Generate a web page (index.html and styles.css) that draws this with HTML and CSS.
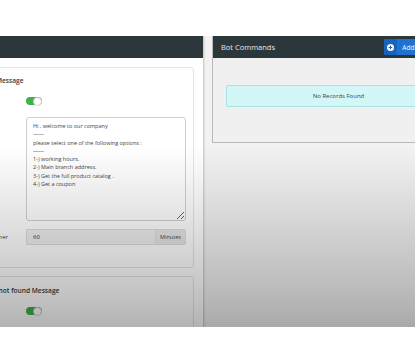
FILE: index.html
```html
<!DOCTYPE html>
<html lang="en">
<head>
    <meta charset="UTF-8">
    <meta name="viewport" content="width=device-width, initial-scale=1.0">
    <title>Bot Settings</title>
    <link rel="stylesheet" href="styles.css">
</head>
<body>
    <div class="topbar"></div>

    <div class="main">
        <section class="panel panel-left">
            <div class="panel-head"></div>
            <div class="panel-body">
                <div class="card card-welcome">
                    <h3>Welcome Message</h3>
                    <div class="row row-switch">
                        <label></label>
                        <span class="switch"></span>
                    </div>
                    <div class="row row-text">
                        <label></label>
                        <textarea>Hi , welcome to our company
——
please select one of the following options :
——
1-) working hours.
2-) Main branch address.
3-) Get the full product catalog .
4-) Get a coupon</textarea>
                    </div>
                    <div class="row row-input">
                        <label>Reply Timer</label>
                        <div class="input-group">
                            <input type="text" value="60">
                            <span class="addon">Minutes</span>
                        </div>
                    </div>
                </div>

                <div class="card card-notfound">
                    <h3>Command not found Message</h3>
                    <div class="row row-switch">
                        <label></label>
                        <span class="switch"></span>
                    </div>
                </div>
            </div>
        </section>

        <section class="panel panel-right">
            <div class="panel-head">
                <span class="panel-title">Bot Commands</span>
                <button class="btn-add">
                    <span class="btn-icon">
                        <svg width="7" height="7" viewBox="0 0 14 14">
                            <circle cx="7" cy="7" r="7" fill="#fff"/>
                            <path d="M7 3.5v7M3.5 7h7" stroke="#1763bd" stroke-width="2"/>
                        </svg>
                    </span>
                    <span class="btn-text">Add New Command</span>
                </button>
            </div>
            <div class="panel-body">
                <div class="alert">No Records Found</div>
            </div>
        </section>
    </div>
</body>
</html>
```

FILE: styles.css
```css
body {
    margin: 0;
    font-family: "Open Sans", "Liberation Sans", sans-serif;
    color: #333;
    background-color: #fff;
    overflow: hidden;
    height: 360px;
}
.topbar {
    height: 36px;
    background-color: #fff;
}
.main {
    position: relative;
    display: flex;
    align-items: flex-start;
    height: 291px;
    background-color: #f2f2f2;
    overflow: hidden;
}
.main::after {
    content: "";
    position: absolute;
    left: 0;
    top: 0;
    right: 0;
    bottom: 0;
    background: linear-gradient(to bottom, rgba(0, 0, 0, 0) 38%, rgba(0, 0, 0, 0.09) 58%, rgba(0, 0, 0, 0.23) 88%, rgba(0, 0, 0, 0.3) 100%);
    pointer-events: none;
}
.panel {
    flex-shrink: 0;
}
.panel-head {
    display: flex;
    align-items: center;
    height: 22px;
    background-color: #2c373c;
}
.panel-left {
    width: 282px;
    margin-left: -79px;
    height: 291px;
    background-color: #fff;
    box-shadow: 1px 0 2px rgba(0, 0, 0, 0.2);
}
.panel-left .panel-body {
    padding: 9px;
}
.card {
    border: 1px solid #e4e4e4;
    border-radius: 3px;
    padding: 8px 7px 22px 12px;
    margin-bottom: 8px;
}
.card h3 {
    margin: 0 0 11px 22px;
    font-size: 6.6px;
    line-height: 10px;
    font-weight: 600;
    color: #3a3a3a;
}
.card-notfound h3 {
    margin-left: 21px;
}
.row {
    display: flex;
    align-items: center;
}
.row label {
    width: 65px;
    margin-right: 18px;
    text-align: right;
    font-size: 6px;
    color: #444;
    white-space: nowrap;
}
.row-switch {
    height: 8px;
    margin-bottom: 12px;
}
.switch {
    position: relative;
    display: block;
    width: 16px;
    height: 8px;
    border-radius: 4px;
    background-color: #3fb04b;
}
.switch::after {
    content: "";
    position: absolute;
    right: 0;
    top: 0;
    width: 7px;
    height: 7px;
    border-radius: 50%;
    background-color: #fff;
    border: 0.5px solid #cfcfcf;
}
.row-text {
    align-items: flex-start;
    margin-bottom: 8px;
}
textarea {
    box-sizing: border-box;
    width: 160px;
    height: 104px;
    margin: 0;
    padding: 4px 6px;
    border: 1px solid #cfcfcf;
    border-radius: 3px;
    font-family: "Open Sans", "Liberation Sans", sans-serif;
    font-size: 5.5px;
    line-height: 8.3px;
    color: #444;
    background-color: #fff;
}
.input-group {
    display: flex;
    width: 160px;
    height: 16px;
}
.input-group input {
    box-sizing: border-box;
    width: 129px;
    height: 16px;
    margin: 0;
    padding: 0 6px;
    border: 1px solid #dcdcdc;
    border-right: none;
    border-radius: 2px 0 0 2px;
    background-color: #efefef;
    font-family: "Open Sans", "Liberation Sans", sans-serif;
    font-size: 6px;
    color: #333;
}
.addon {
    box-sizing: border-box;
    display: flex;
    align-items: center;
    justify-content: center;
    width: 31px;
    height: 16px;
    border: 1px solid #dcdcdc;
    border-radius: 0 2px 2px 0;
    background-color: #e6e6e6;
    font-size: 5.5px;
    color: #444;
}
.card-notfound {
    padding-top: 9px;
    height: 80px;
}
.panel-right {
    width: 252px;
    margin-left: 9px;
    background-color: #f0f0f0;
    border-left: 1px solid #b9b9b9;
    border-bottom: 1px solid #b9b9b9;
}
.panel-right .panel-head {
    justify-content: space-between;
    padding: 0 0 0 8px;
}
.panel-title {
    font-size: 7.5px;
    color: #e8e8e8;
}
.btn-add {
    display: flex;
    align-items: stretch;
    height: 16px;
    padding: 0;
    border: none;
    border-radius: 2px;
    background-color: #1f72d0;
    color: #fff;
    font-family: "Open Sans", "Liberation Sans", sans-serif;
    font-size: 6.5px;
    cursor: pointer;
}
.btn-icon {
    display: flex;
    align-items: center;
    justify-content: center;
    width: 13px;
    background-color: #1763bd;
    border-radius: 2px 0 0 2px;
}
.btn-text {
    display: flex;
    align-items: center;
    padding: 0 2px 0 5px;
    white-space: nowrap;
}
.panel-right .panel-body {
    padding: 27px 14px 35px 13px;
}
.alert {
    height: 22px;
    box-sizing: border-box;
    display: flex;
    align-items: center;
    justify-content: center;
    border: 1px solid #a8e4e6;
    border-radius: 2px;
    background-color: #d3f6f7;
    font-size: 6px;
    color: #2f4a4c;
}
```
